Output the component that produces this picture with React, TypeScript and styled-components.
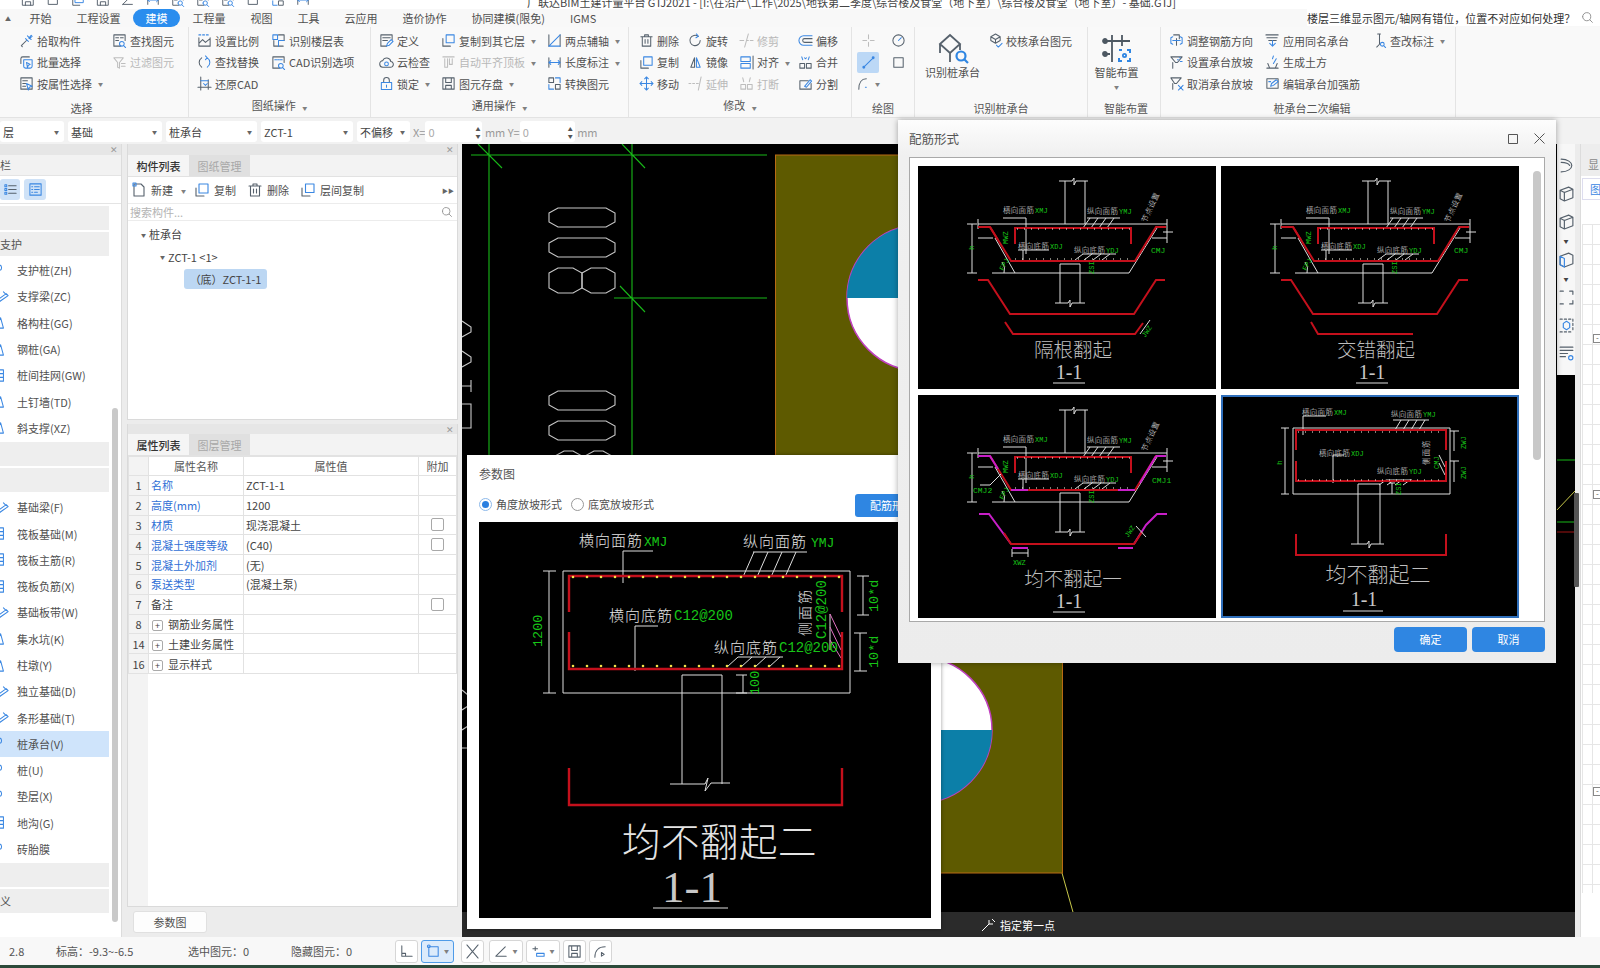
import React from 'react';
import styled, { createGlobalStyle } from 'styled-components';

const FONT = '"Noto Sans CJK SC", "Liberation Sans", sans-serif';
const MONO = '"Liberation Mono", "Noto Sans CJK SC", monospace';

const Global = createGlobalStyle`
  html, body { margin: 0; padding: 0; background: #f4f4f4; }
  * { box-sizing: border-box; }
`;

const Page = styled.div`
  position: relative; width: 1600px; height: 968px; overflow: hidden;
  display: flex; flex-direction: column;
  font-family: ${FONT}; font-size: 11px; color: #505050; background: #f4f4f4;
`;

/* ---------- icon set: [dark strokes, blue strokes] on a 16 grid ---------- */
const G: Record<string, [string, string?]> = {
  pick: ['M3 13l5-5M2.5 13.5l1 1', 'M9 3l4 4M10.5 5.5l2.5-3 1 1-3 2.5M7 6l3 3'],
  batch: ['M2 9V4a2 2 0 012-2h7', 'M5 5h9v7a2 2 0 01-2 2H7a2 2 0 01-2-2zM8 8l4 2-2 1-1 2z'],
  attr: ['M2 2h12v12H2zM4 5h5M4 8h3M4 11h3', 'M8 8l6 3-3 1-1 3z'],
  find: ['M9 14H2V2h12v6M4 5h3M9 5h3M4 8h3', 'M8 11.5a2.5 2.5 0 105 0 2.5 2.5 0 10-5 0M12.5 13.5l2 2'],
  filter: ['M2 3h10L8 8v6l-2-1V8zM10 9h4M10 12h4'],
  scale: ['M2 5v9h12V5M2 11l4-4 3 3 5-4', 'M2 2h2M6 2h2M10 2h2'],
  replace: ['M5 13A6 6 0 015 3', 'M11 3a6 6 0 010 10M9 1l2 2-2 2'],
  restore: ['M4 1v14M1 12h14M12 4v10', 'M4 5h8M7 8l2 2 2-2'],
  floors: ['M3 8v6h10M8 2h6v6', 'M2 2h5v5H2zM8 8h6M8 8v6'],
  cadopt: ['M9 14H2V2h12v6', 'M4 5h2M7 5h2M10 5h2M8 11.5a2.5 2.5 0 105 0 2.5 2.5 0 10-5 0M12.5 13.5l2 2'],
  define: ['M8 14H2V2h12v5M4 5h8M4 8h5', 'M8 14l1-3 4-4 2 2-4 4z'],
  cloud: ['M4.5 13a3.5 3.5 0 01-.5-7 4.5 4.5 0 018.6 1A3 3 0 0112 13z', 'M6 9.5a2 2 0 104 0 2 2 0 10-4 0'],
  lock: ['M5 7V4.5a3 3 0 016 0V7', 'M2.5 7h11v7.5h-11zM8 9.5v2.5'],
  copyL: ['M2 6v8h8', 'M5.5 2h8.5v8.5H5.5z'],
  alignTop: ['M2 2h12M4 4v9h3V4M9 4v6h3V4'],
  axis: ['M2 2v12M14 2v12', 'M2 14L14 2M2 14h12'],
  len: ['M2 3v10M14 3v10', 'M2 8h12M4 6L2 8l2 2M12 6l2 2-2 2'],
  conv: ['M2 2h5v5H2zM9 9h5v5H9z', 'M9 2h5v5M7 14H2V9'],
  del: ['M2 4h12M6 4V2h4v2M3.5 4v10h9V4M6.5 7v4M9.5 7v4'],
  rotate: ['M13 8a5.5 5.5 0 11-2-4.3', 'M9 1l2 2.5L8.5 5'],
  trim: ['M10 1L6 15M1 8h4M8 8h2M12 8h3'],
  offset: ['M15 6H7a2 2 0 000 4h8', 'M15 3H6a5 5 0 000 10h9'],
  copy: ['M2 6v8h8', 'M5 2h9v9H5z'],
  mirror: ['M7 3L3 13h4z', 'M9 3l4 10H9z'],
  alignO: ['M15 1v14', 'M2 2h10v5H2zM2 9h10v5H2z'],
  merge: ['M2 9h5v5H2zM9 9h5v5H9z', 'M4 2l1 3M12 2l-1 3M7 3l1 1M9 3L8 4'],
  move: ['', 'M8 1v14M1 8h14M6 3l2-2 2 2M6 13l2 2 2-2M3 6L1 8l2 2M13 6l2 2-2 2'],
  extend: ['M1 8h2M5 8h2M9 8h2M14 1l-3 14'],
  brk: ['M2 9h5v5H2zM9 9h5v5H9zM4 2l1 4M12 2l-1 4'],
  split: ['M2 5h9M2 5v9h12V8', 'M7 11l6-7 1.5 1.5L9 12z'],
  point: ['M8 2v4M8 10v4M2 8h4M10 8h4'],
  clock: ['M2 8a6 6 0 1012 0A6 6 0 002 8', 'M8 8l3-3'],
  line: ['', 'M3 13L13 3M2 13a1 1 0 102 0 1 1 0 10-2 0M12 3a1 1 0 102 0 1 1 0 10-2 0'],
  rect: ['M3 3h10v10H3z'],
  arc: ['M3 14C3 7 6 3 11 3', 'M10 12h1'],
  check: ['M8 1l5 3v4l-5 3-5-3V4zM3 4l5 3 5-3M8 7v4', 'M9 13l2 2 4-4'],
  rebar: ['M5 2h6v4M8 6v7', 'M2 5v6M2 5l2-1M2 11l2 1M14 5v6M14 5l-2-1M14 11l-2 1M4 8h8'],
  slope: ['M4 14V8M2 2h12l-5 6H7z', 'M9 5h1M11 3h1M12 7h2'],
  noslope: ['M4 14V8M2 2h11l-5 6H6z', 'M10 10l5 5M15 10l-5 5'],
  same: ['M1 2h13M2 5h11M4 8h8', 'M8 8v5M5 11l3 3 3-3'],
  earth: ['M2 14h12M3 9l2 5h6l2-5', 'M8 4l1-3M9 9l3-5'],
  strengthen: ['M2 3h12v10H2z', 'M6 11l1-3 5-4 2 2-5 4zM4 6h2'],
  note: ['M6 1h3M8 1v11l-3 3', 'M9 12a2 2 0 104 0 2 2 0 10-4 0M12.5 13.5l2 2'],
  newdoc: ['M3 2v12h10V5l-3-3H3', 'M2 1h3v3H2z'],
  search: ['M2 7a5 5 0 1010 0A5 5 0 002 7M11 11l3 3'],
  list: ['M6 4h8M6 8h8M6 12h8', 'M2 3h2v2H2zM2 7h2v2H2zM2 11h2v2H2z'],
  detail: ['', 'M2 2h12v12H2zM4 5h1M7 5h5M4 8h1M7 8h5M4 11h1M7 11h3'],
  cube: ['M2 5l8-3 4 2v8l-8 3-4-2zM2 5l4 2 8-3M6 7v8'],
  cubeB: ['M2 5l8-3 4 2v8l-8 3-4-2z', 'M2 5l4 2v8l-4-2z'],
  arcTool: ['M3 2c6 0 10 3 10 6s-4 6-10 6M3 5c4 0 7 1 8 3'],
  brack: ['M2 2h3M11 2h3v3M14 11v3h-3M5 14H2'],
  dash: ['M2 2h2M6 2h2M10 2h2M14 2v2M14 6v2M14 10v2M2 14h2M6 14h2M10 14h2', 'M5 10V6l3-2 3 2v4l-3 2z'],
  paper: ['M2 2h12M2 5h12M2 8h7M2 11h5', 'M10 12a2 2 0 104 0 2 2 0 10-4 0'],
  corner: ['M3 2v11h11M3 10h4v3'],
  cross: ['M2 1l12 14M14 1L2 15'],
  angle: ['M2 13L12 3M2 13h11'],
  tag: ['M2 5h5M4.5 3v4', 'M6 10h8v3H6z'],
  save: ['M2 2h12v12H2zM5 2v5h6V2M5 14v-4h6v4'],
  curve: ['M2 14C2 7 6 3 13 3M9 9l3 2-3 2z'],
  roundRect: ['', 'M3 3h10v10H3zM3 1a1.5 1.5 0 100 3 1.5 1.5 0 100-3'],
  beam: ['', 'M2 12l10-7 2 2-10 7zM9 3l3 3'],
  slab: ['', 'M1 2h8v12H1zM1 6h8M1 10h8'],
  pile: ['', 'M4 2a3 3 0 100 6 3 3 0 100-6M4 8v7'],
  tri: ['', 'M1 14L6 3l3 11z'],
};

const IconSvg = styled.svg<{ $s: number }>`
  width: ${p => p.$s}px; height: ${p => p.$s}px; flex: none; fill: none;
  stroke-linecap: round; stroke-linejoin: round;
`;
const Ic = ({ n, s = 15, off, gray }: { n: string; s?: number; off?: boolean; gray?: boolean }) => {
  const [a, b] = G[n];
  const dark = off ? '#bdbdbd' : gray ? '#8a8a8a' : '#56616c';
  const blue = off ? '#bdbdbd' : '#3a87e2';
  return (
    <IconSvg $s={s} viewBox="0 0 16 16" strokeWidth={1.1}>
      {a && <path d={a} stroke={dark} />}
      {b && <path d={b} stroke={blue} />}
    </IconSvg>
  );
};

/* ---------- title + menu ---------- */
const TitleBar = styled.div`
  height: 9px; background: #fff; overflow: hidden; display: flex; align-items: flex-end;
  padding-left: 21px; flex: none;
`;
const QuickIcons = styled.div`
  display: flex; gap: 11px; width: 506px; flex: none; margin-bottom: 2px;
`;
const TitleText = styled.div`
  font-size: 11px; line-height: 13px; white-space: nowrap; color: #444;
`;
const MenuBar = styled.div`
  height: 18px; flex: none; background: #f8f8f8; display: flex; align-items: center; position: relative;
  padding-left: 5px;
`;
const Collapse = styled.span`
  width: 12px; font-size: 6px; color: #666; flex: none;
`;
const MenuTab = styled.span<{ $on?: boolean }>`
  padding: 0 12.5px; height: 18px; line-height: 18px; font-size: 11px; white-space: nowrap; border-radius: 9px;
  color: ${p => (p.$on ? '#fff' : '#505050')};
  background: ${p => (p.$on ? '#2a8dee' : 'transparent')};
`;
const HelpSearch = styled.div`
  position: absolute; right: 0; top: 0; width: 293px; height: 17px; background: #fff;
  display: flex; align-items: center; justify-content: space-between; padding-right: 6px;
  font-size: 11px; color: #333; white-space: nowrap; overflow: hidden;
`;

/* ---------- ribbon ---------- */
const Ribbon = styled.div`
  height: 91px; flex: none; display: flex; background: #f9f9f9; border-bottom: 1px solid #e3e3e3;
`;
const Group = styled.div<{ $w: number; $pl?: number }>`
  width: ${p => p.$w}px; height: 90px; flex: none; position: relative;
  border-right: 1px solid #e4e4e4; padding: 3px 0 0 ${p => p.$pl ?? 8}px; display: flex;
`;
const GroupLabel = styled.div<{ $shift?: number }>`
  position: absolute; left: ${p => p.$shift ?? 0}px; right: 0; bottom: 1px; text-align: center; font-size: 11px; color: #555; line-height: 16px;
`;
const Col = styled.div<{ $w?: number }>`
  width: ${p => (p.$w ? `${p.$w}px` : 'auto')}; flex: none;
`;
const Item = styled.div<{ $off?: boolean }>`
  height: 21.5px; display: flex; align-items: center; gap: 2px; white-space: nowrap; font-size: 11px;
  color: ${p => (p.$off ? '#b8b8b8' : '#505050')};
`;
const Label = styled.span` margin-left: 1px; `;
const Caret = styled.span`
  font-size: 5px; margin-left: 4px; color: #808080;
`;
const BareCaret = styled(Caret)` margin: 0; line-height: 14px; `;
const DrawGrid = styled.div`
  display: grid; grid-template-columns: 22px 22px; grid-auto-rows: 21.5px; column-gap: 8px;
`;
const DrawCell = styled.div<{ $on?: boolean }>`
  display: flex; align-items: center; justify-content: center; border-radius: 2px;
  background: ${p => (p.$on ? '#bcd8f6' : 'transparent')};
`;
const BigBtn = styled.div<{ $w: number }>`
  width: ${p => p.$w}px; flex: none; display: flex; flex-direction: column; align-items: center;
  padding-top: 3px; font-size: 11px; line-height: 15px; color: #505050;
`;
const Ctx = ({ n, t, caret, off }: { n: string; t: string; caret?: boolean; off?: boolean }) => (
  <Item $off={off}><Ic n={n} off={off} /><Label>{t}</Label>{caret && <Caret>▼</Caret>}</Item>
);

/* ---------- selector row ---------- */
const Selector = styled.div`
  height: 26px; flex: none; background: #f2f2f2; display: flex; align-items: center; font-size: 11px; padding-top: 1px;
`;
const Combo = styled.div<{ $w: number; $mr?: number }>`
  width: ${p => p.$w}px; margin-right: ${p => p.$mr ?? 4}px; height: 21px; flex: none; background: #fff; border-radius: 3px;
  display: flex; align-items: center; justify-content: space-between; padding: 0 5px 0 3px; color: #444; overflow: hidden; white-space: nowrap;
`;
const ComboArrow = styled.span` font-size: 5px; color: #666; `;
const Unit = styled.span` color: #999; white-space: nowrap; `;
const NumInput = styled.div<{ $w: number }>`
  width: ${p => p.$w}px; height: 21px; flex: none; background: #fff; border-radius: 3px; color: #aaa;
  display: flex; align-items: center; justify-content: space-between; padding: 0 2px 0 3px;
`;
const Spin = styled.span` font-size: 5px; line-height: 7px; color: #555; text-align: center; `;

/* ---------- main ---------- */
const Main = styled.div`
  flex: 1; min-height: 0; display: grid; grid-template-columns: 122px 340px 1113px 25px; background: #ececec;
`;
const Nav = styled.aside`
  background: #fff; border-right: 1px solid #dcdcdc; position: relative; display: flex; flex-direction: column; overflow: hidden;
`;
const ThinHead = styled.div<{ $h?: number }>`
  height: ${p => p.$h ?? 11}px; flex: none; background: #e6e6e6; display: flex; align-items: center; justify-content: flex-end;
  padding-right: 3px; font-size: 9px; line-height: 9px; color: #999;
`;
const NavTitle = styled.div`
  height: 21px; flex: none; background: #f2f2f2; font-size: 11px; line-height: 21px; border-bottom: 1px solid #e4e4e4; color: #555;
`;
const NavTools = styled.div`
  height: 28px; flex: none; display: flex; align-items: center; gap: 4px; border-bottom: 1px solid #e4e4e4; margin-bottom: 2px;
`;
const NavToggle = styled.div<{ $w: number }>`
  width: ${p => p.$w}px; height: 21px; background: #cfe2f7; border-radius: 3px; display: flex; align-items: center; justify-content: center;
`;
const NavGroup = styled.div<{ $mt?: number; $mb?: number }>`
  width: 109px; height: 24px; flex: none; margin: ${p => p.$mt ?? 0}px 0 ${p => p.$mb ?? 2}px; background: #eeeeee; font-size: 11px; line-height: 24px; color: #555;
`;
const NavRow = styled.div<{ $on?: boolean }>`
  width: 109px; height: 26.3px; flex: none; display: flex; align-items: center; gap: 7px; font-size: 11px; white-space: nowrap; color: #505050;
  background: ${p => (p.$on ? '#cfe4fb' : 'transparent')};
  svg { margin-left: -5px; }
`;
const ScrollThumb = styled.div`
  position: absolute; left: 112px; top: 264px; width: 6px; height: 514px; background: #c9c9c9; border-radius: 3px;
`;

const Panels = styled.section`
  padding: 0 4px 0 5px; display: flex; flex-direction: column; min-width: 0;
`;
const Panel = styled.div<{ $h: number; $mb?: number }>`
  height: ${p => p.$h}px; flex: none; background: #fff; display: flex; flex-direction: column;
  border: 1px solid #dadada; border-top: 0; margin-bottom: ${p => p.$mb ?? 0}px;
`;
const Tabs = styled.div`
  height: 22px; flex: none; display: flex; background: #f3f3f3; border-bottom: 1px solid #e2e2e2;
`;
const Tab = styled.div<{ $on?: boolean }>`
  width: 61px; line-height: 22px; text-align: center; font-size: 11px;
  font-weight: ${p => (p.$on ? 500 : 400)};
  color: ${p => (p.$on ? '#333' : '#a8a8a8')};
  background: ${p => (p.$on ? '#f5f5f5' : '#e0e0e0')};
`;
const Tools = styled.div`
  height: 27px; flex: none; display: flex; align-items: center; padding-left: 3px; font-size: 11px; gap: 2px; border-bottom: 1px solid #ececec;
`;
const Tool = styled.span<{ $w: number }>`
  width: ${p => p.$w}px; display: inline-flex; align-items: center; gap: 4px; flex: none; white-space: nowrap;
`;
const More = styled.span`
  margin-left: auto; font-size: 6px; color: #666; padding-right: 3px;
`;
const SearchRow = styled.div`
  height: 17px; flex: none; display: flex; justify-content: space-between; align-items: center; padding: 0 4px 0 2px; color: #b4b4b4; border-bottom: 1px solid #ececec;
`;
const Tree = styled.div` padding-top: 2px; `;
const TreeRow = styled.div<{ $ind: number }>`
  height: 22.5px; display: flex; align-items: center; padding-left: ${p => p.$ind}px; font-size: 11px; color: #444; gap: 3px; white-space: nowrap;
`;
const TreeArrow = styled.span` font-size: 5px; color: #666; `;
const TreeSel = styled.span`
  background: #bcd7f3; border-radius: 3px; height: 20px; width: 83px; display: flex; align-items: center; justify-content: center; color: #444;
`;
const PropBody = styled.div`
  flex: 1; min-height: 0; background: linear-gradient(to right, #f3f3f3 20px, #fff 20px);
`;
const PropTable = styled.table`
  width: 328px; border-collapse: collapse; table-layout: fixed; font-size: 11px; color: #444;
  th, td { border: 1px solid #e2e2e2; height: 19.8px; padding: 0 2px; font-weight: 400; white-space: nowrap; overflow: hidden; }
  th { height: 19px; text-align: center; color: #555; }
  td:first-child { text-align: center; padding: 0; background: #f3f3f3; }
`;
const AttrName = styled.span<{ $link?: boolean }>` color: ${p => (p.$link ? '#2f6fd6' : '#444')}; `;
const CheckBox = styled.span`
  display: block; margin: 0 auto; width: 13px; height: 13px; border: 1px solid #a8a8a8; border-radius: 2px; background: #fff;
`;
const Plus = styled.span`
  display: inline-flex; width: 11px; height: 11px; border: 1px solid #aaa; border-radius: 2px; align-items: center; justify-content: center;
  font-size: 9px; line-height: 9px; margin: 0 5px 0 1px; vertical-align: 0;
`;
const PanelFoot = styled.div` height: 30px; flex: none; padding: 4px 0 0 6px; `;
const FootBtn = styled.div`
  width: 74px; height: 22px; background: #fdfdfd; border: 1px solid #e0e0e0; border-radius: 3px; text-align: center; line-height: 20px; font-size: 11px;
`;

const Canvas = styled.section`
  position: relative; background: #000; overflow: hidden;
`;
const CanvasArt = styled.svg` position: absolute; inset: 0; width: 100%; height: 100%; `;
const PromptBar = styled.div`
  position: absolute; left: 0; right: 0; bottom: 0; height: 25px; background: #2b2b2b; color: #fff; font-size: 11px;
  display: flex; align-items: center; padding-left: 519px; gap: 3px;
`;
const SideTools = styled.div`
  position: absolute; right: 0; top: 0; width: 18px; height: 231px; background: #f7f7f7;
  display: flex; flex-direction: column; align-items: center; padding-top: 13px; gap: 11px;
`;
const SideCaret = styled.span` font-size: 5px; line-height: 5px; color: #444; margin: -3px 0; `;
const Dock = styled.aside`
  position: relative; padding-left: 5px; display: flex;
`;
const DockHandle = styled.div`
  position: absolute; left: -1px; top: 349px; width: 5px; height: 94px; background: #555; border-radius: 1px;
`;
const DockPane = styled.div`
  flex: 1; min-width: 0; background: #fff; display: flex; flex-direction: column; overflow: hidden; border-left: 1px solid #dcdcdc;
`;
const DockTitle = styled.div`
  height: 32px; flex: none; background: #ededed; padding: 12px 0 0 7px; font-size: 11px; line-height: 16px; color: #888;
`;
const DockTab = styled.div`
  height: 22px; margin: 2px 0 0 1px; flex: none; border: 1px solid #dde; border-right: 0; color: #3a87e2; font-size: 11px; line-height: 20px; padding-left: 7px;
`;
const DockGrid = styled.div`
  position: relative; margin: 24px 0 0 1px; height: 669px; flex: none;
  background-color: #fff;
  background-image: linear-gradient(#e6e6e6 1px, transparent 1px), linear-gradient(to right, #e6e6e6 1px, transparent 1px);
  background-size: 100% 20px, 10px 100%;
`;
const Expander = styled.span<{ $t: number }>`
  position: absolute; right: -2px; top: ${p => p.$t}px; width: 9px; height: 9px; background: #fff; border: 1px solid #888; font-size: 8px; line-height: 6px; text-align: center;
`;

/* ---------- status ---------- */
const Status = styled.footer`
  height: 28px; flex: none; background: #f8f8f8; display: flex; align-items: center; font-size: 11px; color: #555; white-space: nowrap;
`;
const StatusText = styled.span<{ $w: number; $pl?: number }>` width: ${p => p.$w}px; flex: none; padding-left: ${p => p.$pl ?? 0}px; `;
const StatusBtn = styled.div<{ $w: number; $on?: boolean; $mr?: number }>`
  width: ${p => p.$w}px; height: 23px; flex: none; margin-right: ${p => p.$mr ?? 3}px; border-radius: 3px;
  border: 1px solid ${p => (p.$on ? '#4e9be8' : '#d6d6d6')}; background: ${p => (p.$on ? '#dcebfb' : '#fff')};
  display: flex; align-items: center; justify-content: center; gap: 3px;
`;
const BottomEdge = styled.div` height: 3px; flex: none; background: #2c4a3a; `;

/* ---------- floating windows ---------- */
const ParamWindow = styled.div`
  position: absolute; left: 467px; top: 455px; width: 474px; height: 474px; background: #fff; z-index: 5;
  box-shadow: 0 0 4px rgba(0,0,0,.4); padding: 0 0 0 12px;
`;
const ParamTitle = styled.div` height: 34px; font-size: 12px; line-height: 38px; color: #555; `;
const RadioRow = styled.div`
  height: 30px; margin-bottom: 4px; display: flex; align-items: center; font-size: 11px; color: #505050; white-space: nowrap; position: relative;
`;
const Radio = styled.span<{ $on?: boolean }>`
  width: 13px; height: 13px; border-radius: 50%; border: 1px solid ${p => (p.$on ? '#8db9ea' : '#999')}; margin-right: 4px; display: inline-flex; align-items: center; justify-content: center; flex: none;
  &::after { content: ''; width: 7px; height: 7px; border-radius: 50%; background: ${p => (p.$on ? '#2a7fe0' : 'transparent')}; }
`;
const RadioLabel = styled.span` width: 75px; flex: none; `;
const ConfigBtn = styled.div`
  position: absolute; left: 376px; top: 5px; width: 90px; height: 23px; background: #2f86e2; color: #fff; border-radius: 3px; font-size: 11px; line-height: 23px; padding-left: 15px;
`;
const ParamPane = styled.svg`
  display: block; width: 452px; height: 396px; background: #000; margin-top: -1px;
`;
const FormWindow = styled.div`
  position: absolute; left: 898px; top: 120px; width: 658px; height: 543px; z-index: 6;
  background: linear-gradient(#fdfdfd, #f0f0f0 35px, #ececec); box-shadow: 0 0 6px rgba(0,0,0,.35); padding: 0 11px;
  display: flex; flex-direction: column;
`;
const FormHead = styled.div`
  height: 37px; flex: none; display: flex; align-items: center; justify-content: space-between; font-size: 12.5px; color: #555;
`;
const WinBtns = styled.div` display: flex; gap: 16px; margin-right: 0; align-items: center; `;
const Frame = styled.div`
  position: relative; height: 465px; flex: none; background: #fff; border: 1px solid #a9a9a9; padding: 8px 0 0 8px;
  display: grid; grid-template-columns: 298px 298px; grid-auto-rows: 223px; column-gap: 5px; row-gap: 6px;
`;
const Thumb = styled.svg<{ $sel?: boolean }>`
  display: block; width: 298px; height: 223px; background: #000;
  outline: ${p => (p.$sel ? '2px solid #2f6fbb' : 'none')}; outline-offset: -2px;
`;
const FrameScroll = styled.div`
  position: absolute; right: 3px; top: 13px; width: 8px; height: 289px; border-radius: 4px; background: #c8c8c8;
`;
const FormFoot = styled.div`
  flex: 1; display: flex; justify-content: flex-end; align-items: center; gap: 5px; padding-bottom: 6px;
`;
const BlueBtn = styled.div`
  width: 73px; height: 25px; background: #2f86e2; color: #fff; border-radius: 4px; text-align: center; line-height: 25px; font-size: 11px;
`;

/* ---------- CAD drawing text ---------- */
const CadCn = styled.text<{ $s: number; $c?: string }>`
  font-family: ${FONT}; font-size: ${p => p.$s}px; fill: ${p => p.$c ?? '#e4e4e4'}; font-weight: 300;
`;
const CadLat = styled.text<{ $s: number; $c?: string }>`
  font-family: ${MONO}; font-size: ${p => p.$s}px; fill: ${p => p.$c ?? '#17c417'};
`;
const CadNum = styled.text<{ $s: number }>`
  font-family: "Liberation Serif", serif; font-size: ${p => p.$s}px; fill: #c8c8c8; text-anchor: middle;
`;

const RED = '#c4101c';
const PUR = '#c81fc8';
const WH = '#dedede';

const Lbl = ({ cn, lat, x, y }: { cn: string; lat: string; x: number; y: number }) => (
  <>
    <CadCn $s={7.5} x={x} y={y} letterSpacing="0.3">{cn}</CadCn>
    <CadLat $s={7} x={x + 32} y={y}>{lat}</CadLat>
  </>
);

const Trap = ({ title, variant }: { title: string; variant: 'a' | 'b' | 'c' }) => {
  const edge = variant === 'c' ? PUR : RED;
  return (
    <Thumb viewBox="0 0 298 223">
      <g fill="none" stroke={WH} strokeWidth="1">
        <path d="M60 58H249M60 72H75M234 72H249M77 72L97 107M74 107H211L239 62" />
        <path d="M147 58V15M167 58V15M141 15H154l2-3 0 7 2-4H170" />
        <path d="M142 137V98H162V137M137 137H150l2-3 0 7 2-4H167" />
        <path d="M54 58V107M49 58H59M49 107H59M60 53V63M249 53V77M245 66H255" />
        <path d="M86 107a12 12 0 00-2-11" />
        <path d="M85 52H108V88M169 52H202M188 52l-7 10M196 52l-7 10M180 52l-7 10M172 52l-7 10" />
        <path d="M105 84V95M100 84H131M198 88H165M165 88l-8 6M174 88l-8 6M183 88l-8 6M192 88l-8 6" />
      </g>
      <path d="M72 61L93 95H217L238 61H248" fill="none" stroke={RED} strokeWidth="2" />
      <path d="M60 61H72L80 74" fill="none" stroke={edge} strokeWidth="2" />
      {variant === 'c' && <path d="M238 61H248M238 61L222 88M200 95H217M93 95H110" fill="none" stroke={PUR} strokeWidth="2" />}
      <path d="M97 78V62H213V78" fill="none" stroke={RED} strokeWidth="2" />
      <path d="M99 63H212M97 93H215" stroke="#ffe" strokeWidth="1" strokeDasharray="1 6" />
      {variant === 'c' ? (
        <>
          <path d="M61 119H71L93 149M216 149L228 130L239 119H249" fill="none" stroke={PUR} strokeWidth="2" />
          <path d="M86 138L93 149H216L224 137" fill="none" stroke={RED} strokeWidth="2" />
          <path d="M200 153H215M94 153H110" stroke={PUR} strokeWidth="2" />
          <path d="M94 154v8M110 154v8M94 158H110M218 131l10 11" stroke={WH} />
          <CadLat $s={7} x={95} y={170}>XWZ</CadLat>
          <CadLat $s={7} transform="translate(210 143) rotate(-55)">JWZ</CadLat>
          <CadLat $s={8} x={55} y={98}>CMJ2</CadLat>
          <CadLat $s={8} x={234} y={88}>CMJ1</CadLat>
          <path d="M62 90H72L83 79" fill="none" stroke={WH} />
        </>
      ) : (
        <>
          <path d="M60 114H70L92 148H216L238 114H247" fill="none" stroke={RED} strokeWidth="2" />
          <path d={variant === 'a' ? 'M87 156L95 168H217L225 157' : 'M90 156L97 168H192'} fill="none" stroke={RED} strokeWidth="2" />
          <CadLat $s={8} x={233} y={87}>CMJ</CadLat>
          {variant === 'a' && (
            <>
              <path d="M222 168l10-14" stroke={WH} />
              <CadLat $s={7} transform="translate(227 172) rotate(-55)">JWZ</CadLat>
            </>
          )}
        </>
      )}
      <Lbl cn="横向面筋" lat="XMJ" x={85} y={47} />
      <Lbl cn="纵向面筋" lat="YMJ" x={169} y={48} />
      <Lbl cn="横向底筋" lat="XDJ" x={100} y={83} />
      <Lbl cn="纵向底筋" lat="YDJ" x={156} y={87} />
      <CadCn $s={7.5} transform="translate(228 57) rotate(-65)" letterSpacing="0.5">节点设置</CadCn>
      <CadLat $s={7} transform="translate(90 78) rotate(-90)">MWZ</CadLat>
      <CadLat $s={7} transform="translate(176 108) rotate(-90)">ZSI</CadLat>
      <CadLat $s={7} transform="translate(85 105) rotate(-60)">FPJ</CadLat>
      <CadLat $s={8} transform="translate(56 84) rotate(-90)">h</CadLat>
      <CadCn $s={19.5} x={155} y={191} textAnchor="middle" $c="#bdbdbd">{title}</CadCn>
      <CadNum $s={20} x={151} y={213}>1-1</CadNum>
      <path d="M135 217H167" stroke={WH} />
    </Thumb>
  );
};

const SmallFlat = () => (
  <Thumb viewBox="0 0 298 223" $sel>
    <g fill="none" stroke={WH}>
      <path d="M72 33H229V99H72zM137 149V89H159V149M130 149H146l2-3v7l2-4H163" />
      <path d="M64 33V99M60 33H68M60 99H68M233 36V56M229 36H238M233 66V87M229 66H238M171 88V99M168 88H174" />
      <path d="M105 21H82V40M123 60H112V88M208 25H172M180 25l-6 10M188 25l-6 10M196 25l-6 10M204 25l-6 10" />
      <path d="M191 85H165M165 85l-7 5M173 85l-7 5M181 85l-7 5M189 85l-7 5M218 60l6 12M218 68l6 12" />
    </g>
    <path d="M75 55V35H225V55M75 66V86H225V66M75 139V160H225V139" fill="none" stroke={RED} strokeWidth="2" />
    <path d="M77 37H224M77 85H224" stroke="#ffe" strokeDasharray="1 6" />
    <Lbl cn="横向面筋" lat="XMJ" x={81} y={20} />
    <Lbl cn="纵向面筋" lat="YMJ" x={170} y={22} />
    <Lbl cn="横向底筋" lat="XDJ" x={98} y={61} />
    <Lbl cn="纵向底筋" lat="YDJ" x={156} y={79} />
    <CadCn $s={7.5} transform="translate(208 70) rotate(-90)" letterSpacing="1">侧面筋</CadCn>
    <CadLat $s={7} transform="translate(218 74) rotate(-90)">CMJ</CadLat>
    <CadLat $s={7} transform="translate(245 54) rotate(-90)">ZWJ</CadLat>
    <CadLat $s={7} transform="translate(245 84) rotate(-90)">ZWJ</CadLat>
    <CadLat $s={7} transform="translate(180 100) rotate(-90)">ZSI</CadLat>
    <CadLat $s={8} transform="translate(61 70) rotate(-90)">h</CadLat>
    <CadCn $s={21} x={157} y={187} textAnchor="middle" $c="#bdbdbd">均不翻起二</CadCn>
    <CadNum $s={20} x={143} y={211}>1-1</CadNum>
    <path d="M122 216H162" stroke={WH} />
  </Thumb>
);

const dots = Array.from({ length: 20 }, (_, i) => 94 + i * 14);

const BigSection = () => (
  <ParamPane viewBox="0 0 452 396">
    <g fill="none" stroke={WH}>
      <path d="M84 49H371V171H84zM203 262V153H243V262M191 262H226l3-6-3 13 6-8H251" />
      <path d="M70 49V171M64 49H77M64 171H77M384 54V93M378 54H390M378 93H390M381 111V149M375 111H388M375 149H388M264 153V171M257 153H268M257 171H268" />
      <path d="M174 29H144V61M179 104H156V149M274 30H328M275 30L264 55M289 30L278 55M303 30L292 55M317 30L306 55" />
      <path d="M304 135H259M259 135L248 145M273 135L262 145M287 135L276 145M301 135L290 145M351 92V128" />
    </g>
    <path d="M351 92L362 115M351 105L362 128M351 118L362 136" stroke="#e070c0" fill="none" />
    <path d="M90 90V54H363V90M90 110V147H363V110M90 246V283H363V246" fill="none" stroke={RED} strokeWidth="2.4" />
    {dots.map(x => (
      <React.Fragment key={x}>
        <circle cx={x} cy={55} r="1.3" fill="#f2e24a" />
        <circle cx={x} cy={144} r="1.3" fill="#f2e24a" />
      </React.Fragment>
    ))}
    <CadCn $s={15} x={100} y={24} letterSpacing="1">横向面筋</CadCn>
    <CadLat $s={13} x={165} y={24}>XMJ</CadLat>
    <CadCn $s={15} x={264} y={25} letterSpacing="1">纵向面筋</CadCn>
    <CadLat $s={13} x={332} y={25}>YMJ</CadLat>
    <CadCn $s={15} x={130} y={99} letterSpacing="1">横向底筋</CadCn>
    <CadLat $s={14} x={195} y={98}>C12@200</CadLat>
    <CadCn $s={15} x={235} y={131} letterSpacing="1">纵向底筋</CadCn>
    <CadLat $s={14} x={300} y={130}>C12@200</CadLat>
    <CadCn $s={14} transform="translate(331 114) rotate(-90)" letterSpacing="2">侧面筋</CadCn>
    <CadLat $s={14} transform="translate(347 117) rotate(-90)">C12@200</CadLat>
    <CadLat $s={13.5} transform="translate(399 90) rotate(-90)">10*d</CadLat>
    <CadLat $s={13.5} transform="translate(399 146) rotate(-90)">10*d</CadLat>
    <CadLat $s={13.5} transform="translate(63 125) rotate(-90)">1200</CadLat>
    <CadLat $s={13.5} transform="translate(280 173) rotate(-90)">100</CadLat>
    <CadCn $s={38.5} x={143} y={334} letterSpacing="0.5">均不翻起二</CadCn>
    <CadNum $s={45} x={213} y={380}>1-1</CadNum>
    <path d="M174 386H249" stroke={WH} />
  </ParamPane>
);

/* ---------- page data ---------- */
const navTop = [['支护桩(ZH)', 'pile'], ['支撑梁(ZC)', 'beam'], ['格构柱(GG)', 'tri'], ['钢桩(GA)', 'tri'], ['桩间挂网(GW)', 'slab'], ['土钉墙(TD)', 'tri'], ['斜支撑(XZ)', 'tri']];
const navBottom = [['基础梁(F)', 'beam'], ['筏板基础(M)', 'slab'], ['筏板主筋(R)', 'slab'], ['筏板负筋(X)', 'slab'], ['基础板带(W)', 'beam'], ['集水坑(K)', 'tri'], ['柱墩(Y)', 'tri'], ['独立基础(D)', 'beam'], ['条形基础(T)', 'beam'], ['桩承台(V)', 'pile'], ['桩(U)', 'pile'], ['垫层(X)', 'pile'], ['地沟(G)', 'slab'], ['砖胎膜', 'pile']];
const props: [number, string, string, boolean, boolean][] = [
  [1, '名称', 'ZCT-1-1', true, false],
  [2, '高度(mm)', '1200', true, false],
  [3, '材质', '现浇混凝土', true, true],
  [4, '混凝土强度等级', '(C40)', true, true],
  [5, '混凝土外加剂', '(无)', true, false],
  [6, '泵送类型', '(混凝土泵)', true, false],
  [7, '备注', '', false, true],
];
const quick = ['save', 'rect', 'copy', 'save', 'angle', 'len', 'find', 'find', 'find', 'rect', 'conv', 'len'];

const Octagon = ({ x, y, w, h }: { x: number; y: number; w: number; h: number }) => (
  <path d={`M${x} ${y + 5}L${x + 9} ${y}H${x + w - 9}L${x + w} ${y + 5}V${y + h - 5}L${x + w - 9} ${y + h}H${x + 9}L${x} ${y + h - 5}z`} />
);

const PileBig = () => (
  <svg width="32" height="32" viewBox="0 0 32 32" fill="none" stroke="#56616c" strokeWidth="1.8">
    <path d="M3 11L13 2l10 9-10 9zM3 11v9M23 11v6M13 20v9" />
    <circle cx="24" cy="23" r="4.5" stroke="#2f86e2" strokeWidth="2.2" />
    <path d="M27.5 26.5L31 30" stroke="#2f86e2" strokeWidth="2.2" />
  </svg>
);
const SmartBig = () => (
  <svg width="32" height="32" viewBox="0 0 32 32" fill="none" stroke="#4d5862" strokeWidth="1.8">
    <path d="M2 8h27M2 21h7M11 2v27M21 2v11" />
    <circle cx="4" cy="8" r="2" /><circle cx="4" cy="21" r="2" />
    <path d="M18 17h3M26 17h3v3M29 25v3h-3M21 28h-3v-3M18 20v0" stroke="#2f86e2" strokeWidth="2" />
    <circle cx="23.5" cy="22.5" r="1.6" stroke="#2f86e2" />
  </svg>
);

export default function App() {
  return (
    <Page>
      <Global />
      <TitleBar>
        <QuickIcons>{quick.map((q, i) => <Ic key={i} n={q} s={14} />)}</QuickIcons>
        <TitleText>广联达BIM土建计量平台 GTJ2021 - [I:\在沿产\工作\2025\地铁第二季度\综合楼及食堂（地下室）\综合楼及食堂（地下室）- 基础.GTJ]</TitleText>
      </TitleBar>
      <MenuBar>
        <Collapse>▲</Collapse>
        <MenuTab>开始</MenuTab>
        <MenuTab>工程设置</MenuTab>
        <MenuTab $on>建模</MenuTab>
        <MenuTab>工程量</MenuTab>
        <MenuTab>视图</MenuTab>
        <MenuTab>工具</MenuTab>
        <MenuTab>云应用</MenuTab>
        <MenuTab>造价协作</MenuTab>
        <MenuTab>协同建模(限免)</MenuTab>
        <MenuTab>IGMS</MenuTab>
        <HelpSearch>楼层三维显示图元/轴网有错位，位置不对应如何处理？<Ic n="search" s={13} gray /></HelpSearch>
      </MenuBar>

      <Ribbon>
        <Group $w={189} $pl={19}>
          <Col $w={93}>
            <Ctx n="pick" t="拾取构件" />
            <Ctx n="batch" t="批量选择" />
            <Ctx n="attr" t="按属性选择" caret />
          </Col>
          <Col>
            <Ctx n="find" t="查找图元" />
            <Ctx n="filter" t="过滤图元" off />
          </Col>
          <GroupLabel $shift={-25}>选择</GroupLabel>
        </Group>
        <Group $w={182}>
          <Col $w={74}>
            <Ctx n="scale" t="设置比例" />
            <Ctx n="replace" t="查找替换" />
            <Ctx n="restore" t="还原CAD" />
          </Col>
          <Col>
            <Ctx n="floors" t="识别楼层表" />
            <Ctx n="cadopt" t="CAD识别选项" />
          </Col>
          <GroupLabel>图纸操作 <Caret>▼</Caret></GroupLabel>
        </Group>
        <Group $w={258}>
          <Col $w={62}>
            <Ctx n="define" t="定义" />
            <Ctx n="cloud" t="云检查" />
            <Ctx n="lock" t="锁定" caret />
          </Col>
          <Col $w={106}>
            <Ctx n="copyL" t="复制到其它层" caret />
            <Ctx n="alignTop" t="自动平齐顶板" caret off />
            <Ctx n="save" t="图元存盘" caret />
          </Col>
          <Col>
            <Ctx n="axis" t="两点辅轴" caret />
            <Ctx n="len" t="长度标注" caret />
            <Ctx n="conv" t="转换图元" />
          </Col>
          <GroupLabel>通用操作 <Caret>▼</Caret></GroupLabel>
        </Group>
        <Group $w={223} $pl={10}>
          <Col $w={49}>
            <Ctx n="del" t="删除" />
            <Ctx n="copy" t="复制" />
            <Ctx n="move" t="移动" />
          </Col>
          <Col $w={51}>
            <Ctx n="rotate" t="旋转" />
            <Ctx n="mirror" t="镜像" />
            <Ctx n="extend" t="延伸" off />
          </Col>
          <Col $w={59}>
            <Ctx n="trim" t="修剪" off />
            <Ctx n="alignO" t="对齐" caret />
            <Ctx n="brk" t="打断" off />
          </Col>
          <Col>
            <Ctx n="offset" t="偏移" />
            <Ctx n="merge" t="合并" />
            <Ctx n="split" t="分割" />
          </Col>
          <GroupLabel>修改 <Caret>▼</Caret></GroupLabel>
        </Group>
        <Group $w={63} $pl={5}>
          <DrawGrid>
            <DrawCell><Ic n="point" off /></DrawCell>
            <DrawCell><Ic n="clock" /></DrawCell>
            <DrawCell $on><Ic n="line" /></DrawCell>
            <DrawCell><Ic n="rect" /></DrawCell>
            <DrawCell><Ic n="arc" /><Caret>▼</Caret></DrawCell>
          </DrawGrid>
          <GroupLabel>绘图</GroupLabel>
        </Group>
        <Group $w={173} $pl={2}>
          <BigBtn $w={71}><PileBig />识别桩承台</BigBtn>
          <Col><Ctx n="check" t="校核承台图元" /></Col>
          <GroupLabel>识别桩承台</GroupLabel>
        </Group>
        <Group $w={73} $pl={0}>
          <BigBtn $w={57}><SmartBig />智能布置<BareCaret>▼</BareCaret></BigBtn>
          <GroupLabel $shift={4}>智能布置</GroupLabel>
        </Group>
        <Group $w={295}>
          <Col $w={96}>
            <Ctx n="rebar" t="调整钢筋方向" />
            <Ctx n="slope" t="设置承台放坡" />
            <Ctx n="noslope" t="取消承台放坡" />
          </Col>
          <Col $w={107}>
            <Ctx n="same" t="应用同名承台" />
            <Ctx n="earth" t="生成土方" />
            <Ctx n="strengthen" t="编辑承台加强筋" />
          </Col>
          <Col><Ctx n="note" t="查改标注" caret /></Col>
          <GroupLabel $shift={8}>桩承台二次编辑</GroupLabel>
        </Group>
      </Ribbon>

      <Selector>
        <Combo $w={64}>层<ComboArrow>▼</ComboArrow></Combo>
        <Combo $w={94}>基础<ComboArrow>▼</ComboArrow></Combo>
        <Combo $w={91}>桩承台<ComboArrow>▼</ComboArrow></Combo>
        <Combo $w={92}>ZCT-1<ComboArrow>▼</ComboArrow></Combo>
        <Combo $w={53} $mr={3}>不偏移<ComboArrow>▼</ComboArrow></Combo>
        <Unit>X=</Unit>
        <NumInput $w={57}>0<Spin>▲<br />▼</Spin></NumInput>
        <Unit>&nbsp;mm Y=</Unit>
        <NumInput $w={55}>0<Spin>▲<br />▼</Spin></NumInput>
        <Unit>&nbsp;mm</Unit>
      </Selector>

      <Main>
        <Nav>
          <ThinHead>✕</ThinHead>
          <NavTitle>栏</NavTitle>
          <NavTools>
            <NavToggle $w={20}><Ic n="list" /></NavToggle>
            <NavToggle $w={22}><Ic n="detail" /></NavToggle>
          </NavTools>
          <NavGroup />
          <NavGroup $mb={1}>支护</NavGroup>
          {navTop.map(([t, i]) => <NavRow key={t}><Ic n={i} s={15} />{t}</NavRow>)}
          <NavGroup $mt={1} />
          <NavGroup />
          {navBottom.map(([t, i]) => <NavRow key={t} $on={t === '桩承台(V)'}><Ic n={i} s={15} />{t}</NavRow>)}
          <NavGroup $mt={1} />
          <NavGroup>义</NavGroup>
          <ScrollThumb />
        </Nav>

        <Panels>
          <Panel $h={276} $mb={4}>
            <ThinHead>✕</ThinHead>
            <Tabs><Tab $on>构件列表</Tab><Tab>图纸管理</Tab></Tabs>
            <Tools>
              <Tool $w={61}><Ic n="newdoc" s={16} />新建<Caret>▼</Caret></Tool>
              <Tool $w={51}><Ic n="copy" s={16} />复制</Tool>
              <Tool $w={51}><Ic n="del" s={16} />删除</Tool>
              <Tool $w={80}><Ic n="copyL" s={16} />层间复制</Tool>
              <More>▶▶</More>
            </Tools>
            <SearchRow>搜索构件...<Ic n="search" s={12} gray /></SearchRow>
            <Tree>
              <TreeRow $ind={13}><TreeArrow>▼</TreeArrow>桩承台</TreeRow>
              <TreeRow $ind={32}><TreeArrow>▼</TreeArrow>ZCT-1 &lt;1&gt;</TreeRow>
              <TreeRow $ind={56}><TreeSel>（底）ZCT-1-1</TreeSel></TreeRow>
            </Tree>
          </Panel>
          <Panel $h={483}>
            <ThinHead $h={10}>✕</ThinHead>
            <Tabs><Tab $on>属性列表</Tab><Tab>图层管理</Tab></Tabs>
            <PropBody>
              <PropTable>
                <colgroup>
                  <col width="20" /><col width="95" /><col width="175" /><col width="38" />
                </colgroup>
                <thead>
                  <tr><th /><th>属性名称</th><th>属性值</th><th>附加</th></tr>
                </thead>
                <tbody>
                  {props.map(([n, k, v, link, chk]) => (
                    <tr key={n}>
                      <td>{n}</td>
                      <td><AttrName $link={link}>{k}</AttrName></td>
                      <td>{v}</td>
                      <td>{chk && <CheckBox />}</td>
                    </tr>
                  ))}
                  {([[8, '钢筋业务属性'], [14, '土建业务属性'], [16, '显示样式']] as [number, string][]).map(([n, k]) => (
                    <tr key={n}>
                      <td>{n}</td>
                      <td><Plus>+</Plus>{k}</td>
                      <td /><td />
                    </tr>
                  ))}
                </tbody>
              </PropTable>
            </PropBody>
          </Panel>
          <PanelFoot><FootBtn>参数图</FootBtn></PanelFoot>
        </Panels>

        <Canvas>
          <CanvasArt viewBox="462 144 1113 793">
            <g stroke="#18b818" fill="none" strokeWidth="1.1">
              <path d="M489 144V460M632 144V460M471 155H767M614 298H767M478 144L502 168M622 144L645 168M620 286L645 312" />
              <path d="M1557 460H1575M1557 522H1575" />
            </g>
            <path d="M1557 532H1575" stroke="#a01414" />
            <path d="M1557 510L1575 491M1062 873L1080 937" stroke="#c8c84a" fill="none" />
            <rect x="775.5" y="155" width="287" height="718" fill="#5e5a00" stroke="#b86a14" />
            <circle cx="920" cy="298" r="73" fill="#fff" stroke="#c040c0" strokeWidth="1.5" />
            <path d="M847 298a73 73 0 01146 0z" fill="#0c7fa8" />
            <circle cx="919" cy="730" r="73" fill="#fff" stroke="#c040c0" strokeWidth="1.5" />
            <path d="M846 730a73 73 0 00146 0z" fill="#0c7fa8" />
            <g fill="none" stroke="#c8c8c8" strokeWidth="1.1">
              <Octagon x={549} y={208} w={66} h={19} />
              <Octagon x={549} y={238} w={66} h={19} />
              <Octagon x={549} y={268} w={33} h={25} />
              <Octagon x={582} y={268} w={33} h={25} />
              <Octagon x={549} y={391} w={66} h={19} />
              <Octagon x={549} y={421} w={66} h={19} />
              <Octagon x={555} y={451} w={27} h={20} />
              <Octagon x={585} y={451} w={27} h={20} />
              <path d="M462 321l9 6v5l-9 5M462 351l9 6v5l-9 5M462 386H471M471 380V392M462 404H471V428H462" />
              <path d="M462 690l6 5M462 710l6 -4M462 730l6 -4M462 748h6" />
            </g>
          </CanvasArt>
          <SideTools>
            <Ic n="arcTool" s={17} />
            <Ic n="cube" s={17} />
            <Ic n="cube" s={17} />
            <SideCaret>▼</SideCaret>
            <Ic n="cubeB" s={17} />
            <SideCaret>▼</SideCaret>
            <Ic n="brack" s={17} />
            <Ic n="dash" s={17} />
            <Ic n="paper" s={17} />
          </SideTools>
          <PromptBar>
            <svg width="16" height="14" viewBox="0 0 16 14" fill="none" stroke="#fff"><path d="M1 13L8 6M8 2v4h4M11 1l3 3" /></svg>
            指定第一点
          </PromptBar>
        </Canvas>

        <Dock>
          <DockHandle />
          <DockPane>
            <DockTitle>显</DockTitle>
            <DockTab>图</DockTab>
            <DockGrid>
              <Expander $t={110}>-</Expander>
              <Expander $t={266}>-</Expander>
              <Expander $t={563}>-</Expander>
            </DockGrid>
          </DockPane>
        </Dock>
      </Main>

      <Status>
        <StatusText $w={56} $pl={9}>2.8</StatusText>
        <StatusText $w={132}>标高：-9.3~-6.5</StatusText>
        <StatusText $w={103}>选中图元：0</StatusText>
        <StatusText $w={104}>隐藏图元：0</StatusText>
        <StatusBtn $w={23}><Ic n="corner" /></StatusBtn>
        <StatusBtn $w={33} $on $mr={7}><Ic n="roundRect" /><BareCaret>▼</BareCaret></StatusBtn>
        <StatusBtn $w={23} $mr={5}><Ic n="cross" /></StatusBtn>
        <StatusBtn $w={34}><Ic n="angle" /><BareCaret>▼</BareCaret></StatusBtn>
        <StatusBtn $w={34}><Ic n="tag" /><BareCaret>▼</BareCaret></StatusBtn>
        <StatusBtn $w={23}><Ic n="save" /></StatusBtn>
        <StatusBtn $w={23}><Ic n="curve" /></StatusBtn>
      </Status>
      <BottomEdge />

      <ParamWindow>
        <ParamTitle>参数图</ParamTitle>
        <RadioRow>
          <Radio $on /><RadioLabel>角度放坡形式</RadioLabel>
          <Radio /><RadioLabel>底宽放坡形式</RadioLabel>
          <ConfigBtn>配筋形式</ConfigBtn>
        </RadioRow>
        <BigSection />
      </ParamWindow>

      <FormWindow>
        <FormHead>
          配筋形式
          <WinBtns>
            <svg width="10" height="10" viewBox="0 0 10 10" fill="none" stroke="#555"><path d="M.5.5h9v9h-9z" /></svg>
            <svg width="11" height="11" viewBox="0 0 11 11" fill="none" stroke="#555"><path d="M.5.5l10 10M10.5.5L.5 10.5" /></svg>
          </WinBtns>
        </FormHead>
        <Frame>
          <Trap title="隔根翻起" variant="a" />
          <Trap title="交错翻起" variant="b" />
          <Trap title="均不翻起一" variant="c" />
          <SmallFlat />
          <FrameScroll />
        </Frame>
        <FormFoot>
          <BlueBtn>确定</BlueBtn>
          <BlueBtn>取消</BlueBtn>
        </FormFoot>
      </FormWindow>
    </Page>
  );
}
